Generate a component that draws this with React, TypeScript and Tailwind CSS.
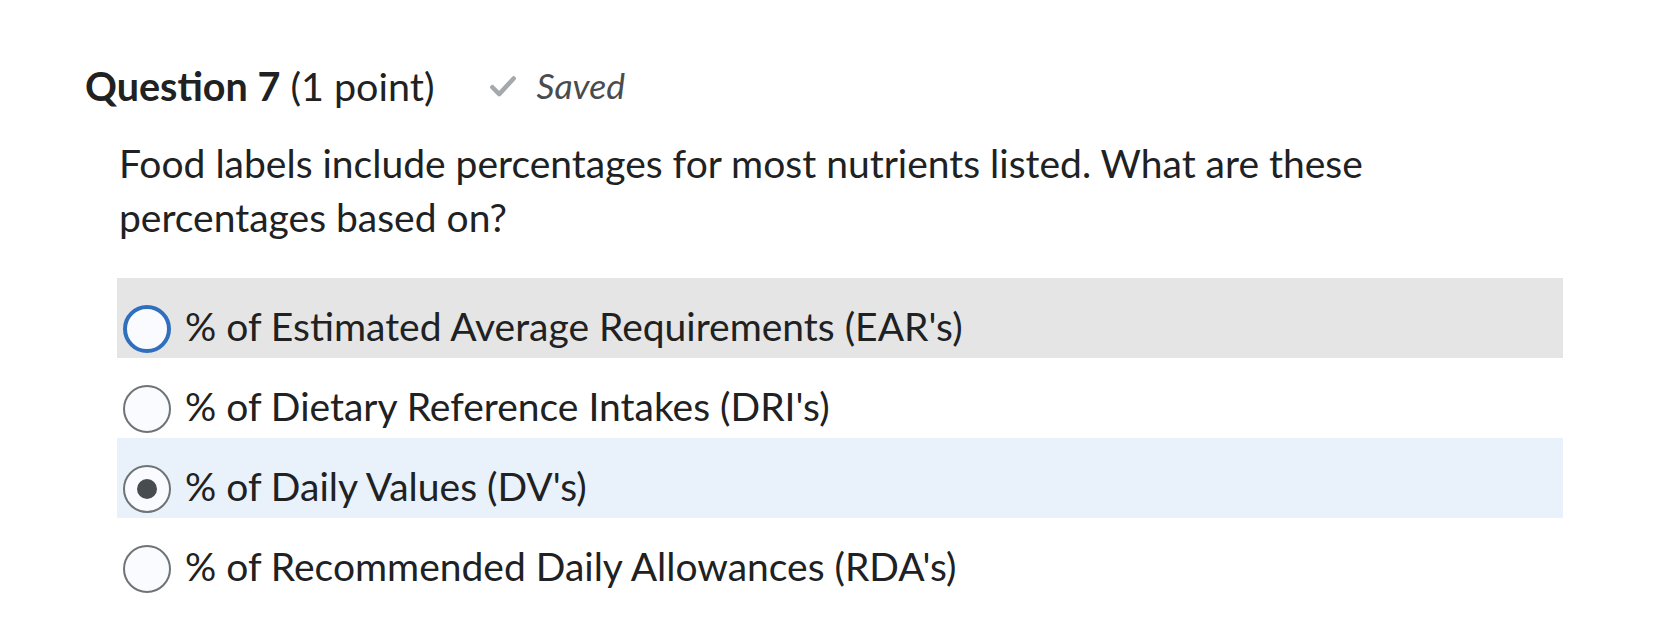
import { useState } from 'react';

const options = [
  "% of Estimated Average Requirements (EAR's)",
  "% of Dietary Reference Intakes (DRI's)",
  "% of Daily Values (DV's)",
  "% of Recommended Daily Allowances (RDA's)",
];

function Radio({ checked, focused }: { checked: boolean; focused: boolean }) {
  return (
    <span
      className={`mt-[3px] flex h-[48px] w-[48px] shrink-0 items-center justify-center rounded-full bg-[#f9fbff] ${
        focused ? 'border-[4px] border-[#2f6fbd]' : 'border-[2px] border-[#6e7376]'
      }`}
    >
      {checked && <span className="h-[20px] w-[20px] rounded-full bg-[#494c4e]" />}
    </span>
  );
}

export default function App() {
  const [selected, setSelected] = useState(2);
  const hovered = 0;

  return (
    <div className="min-h-[618px] w-[1660px] bg-white pt-[63px] font-['Lato',sans-serif] text-[#202122]">
      <div className="flex items-center pl-[85px]">
        <h2 className="text-[39.5px] leading-[45px]">
          <span className="font-bold">Question 7</span> (1 point)
        </h2>
        <div className="ml-[54px] flex items-center text-[#494c4e]">
          <svg className="h-[30px] w-[30px]" viewBox="0 0 24 24" fill="none" stroke="#a3a9ad" strokeWidth={3.6} strokeLinecap="round" strokeLinejoin="round">
            <path d="M3.5 13l5.5 5.5L20.5 6" />
          </svg>
          <span className="ml-[18px] text-[35.5px] italic leading-[45px]">Saved</span>
        </div>
      </div>

      <p className="ml-[119px] mt-[28px] w-[1300px] text-[39px] leading-[54px]">
        Food labels include percentages for most nutrients listed. What are these percentages based on?
      </p>

      <div className="ml-[117px] mt-[34px] w-[1446px]">
        {options.map((opt, i) => (
          <label
            key={opt}
            onClick={() => setSelected(i)}
            className={`flex h-[80px] cursor-pointer items-start gap-[14px] pl-[6px] pt-[24px] ${
              i === hovered ? 'bg-[#e5e5e5]' : i === selected ? 'bg-[#e9f1fb]' : 'bg-white'
            }`}
          >
            <Radio checked={i === selected} focused={i === hovered} />
            <span className="text-[39px] leading-[48px]">{opt}</span>
          </label>
        ))}
      </div>
    </div>
  );
}
